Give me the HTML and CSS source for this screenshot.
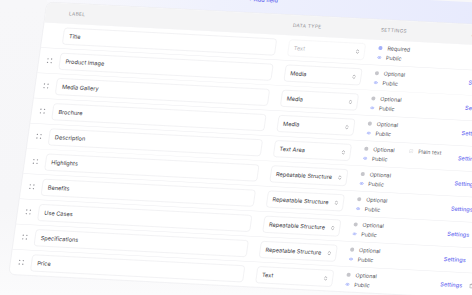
FILE: index.html
```html
<!DOCTYPE html>
<html>
<head>
<meta charset="utf-8">
<link rel="stylesheet" href="styles.css">
</head>
<body>
<div class="stage">
  <div class="board">
    <div class="toolbar"><span class="add">+ Add field</span></div>
    <div class="card">
      <div class="head">
        <div class="h-label">Label</div>
        <div class="h-type">Data type</div>
        <div class="h-set">Settings</div>
        <div class="h-act">Actions</div>
      </div>

      <div class="row">
        <div class="grip"></div>
        <div class="field">Title</div>
        <div class="select is-disabled"><span>Text</span><svg class="chev" viewBox="0 0 8 12"><path d="M1.5 4.5 4 2l2.5 2.5M1.5 7.5 4 10l2.5-2.5"/></svg></div>
        <div class="settings">
          <div class="opts">
            <div class="opt"><i class="dot req"></i>Required</div>
            <div class="opt"><svg class="eye" viewBox="0 0 10 7"><path d="M.8 3.5C2 1.6 3.4.8 5 .8s3 .8 4.2 2.7C8 5.4 6.6 6.2 5 6.2S2 5.4.8 3.5Z"/><circle cx="5" cy="3.5" r="1.3"/></svg>Public</div>
          </div>
        </div>
        <div class="link"></div>
        <div class="act"></div>
      </div>

      <div class="row">
        <div class="grip"><div class="dots"><span></span><span></span><span></span><span></span></div></div>
        <div class="field">Product Image</div>
        <div class="select"><span>Media</span><svg class="chev" viewBox="0 0 8 12"><path d="M1.5 4.5 4 2l2.5 2.5M1.5 7.5 4 10l2.5-2.5"/></svg></div>
        <div class="settings">
          <div class="opts">
            <div class="opt"><i class="dot"></i>Optional</div>
            <div class="opt"><svg class="eye" viewBox="0 0 10 7"><path d="M.8 3.5C2 1.6 3.4.8 5 .8s3 .8 4.2 2.7C8 5.4 6.6 6.2 5 6.2S2 5.4.8 3.5Z"/><circle cx="5" cy="3.5" r="1.3"/></svg>Public</div>
          </div>
        </div>
        <div class="link">Settings</div>
        <div class="act"><svg class="bin" viewBox="0 0 10 12"><path d="M1 3h8M3.5 3V1.5h3V3M2 3l.6 7.5h4.8L8 3"/></svg></div>
      </div>

      <div class="row">
        <div class="grip"><div class="dots"><span></span><span></span><span></span><span></span></div></div>
        <div class="field">Media Gallery</div>
        <div class="select"><span>Media</span><svg class="chev" viewBox="0 0 8 12"><path d="M1.5 4.5 4 2l2.5 2.5M1.5 7.5 4 10l2.5-2.5"/></svg></div>
        <div class="settings">
          <div class="opts">
            <div class="opt"><i class="dot"></i>Optional</div>
            <div class="opt"><svg class="eye" viewBox="0 0 10 7"><path d="M.8 3.5C2 1.6 3.4.8 5 .8s3 .8 4.2 2.7C8 5.4 6.6 6.2 5 6.2S2 5.4.8 3.5Z"/><circle cx="5" cy="3.5" r="1.3"/></svg>Public</div>
          </div>
        </div>
        <div class="link">Settings</div>
        <div class="act"><svg class="bin" viewBox="0 0 10 12"><path d="M1 3h8M3.5 3V1.5h3V3M2 3l.6 7.5h4.8L8 3"/></svg></div>
      </div>

      <div class="row">
        <div class="grip"><div class="dots"><span></span><span></span><span></span><span></span></div></div>
        <div class="field">Brochure</div>
        <div class="select"><span>Media</span><svg class="chev" viewBox="0 0 8 12"><path d="M1.5 4.5 4 2l2.5 2.5M1.5 7.5 4 10l2.5-2.5"/></svg></div>
        <div class="settings">
          <div class="opts">
            <div class="opt"><i class="dot"></i>Optional</div>
            <div class="opt"><svg class="eye" viewBox="0 0 10 7"><path d="M.8 3.5C2 1.6 3.4.8 5 .8s3 .8 4.2 2.7C8 5.4 6.6 6.2 5 6.2S2 5.4.8 3.5Z"/><circle cx="5" cy="3.5" r="1.3"/></svg>Public</div>
          </div>
        </div>
        <div class="link">Settings</div>
        <div class="act"><svg class="bin" viewBox="0 0 10 12"><path d="M1 3h8M3.5 3V1.5h3V3M2 3l.6 7.5h4.8L8 3"/></svg></div>
      </div>

      <div class="row">
        <div class="grip"><div class="dots"><span></span><span></span><span></span><span></span></div></div>
        <div class="field">Description</div>
        <div class="select"><span>Text Area</span><svg class="chev" viewBox="0 0 8 12"><path d="M1.5 4.5 4 2l2.5 2.5M1.5 7.5 4 10l2.5-2.5"/></svg></div>
        <div class="settings">
          <div class="opts">
            <div class="opt"><i class="dot"></i>Optional</div>
            <div class="opt"><svg class="eye" viewBox="0 0 10 7"><path d="M.8 3.5C2 1.6 3.4.8 5 .8s3 .8 4.2 2.7C8 5.4 6.6 6.2 5 6.2S2 5.4.8 3.5Z"/><circle cx="5" cy="3.5" r="1.3"/></svg>Public</div>
          </div>
          <div class="plain"><svg class="check" viewBox="0 0 9 9"><rect x=".6" y=".6" width="7.8" height="7.8" rx="1.6"/><path d="M2.4 4.6 3.9 6l2.7-3"/></svg>Plain text</div>
        </div>
        <div class="link">Settings</div>
        <div class="act"><svg class="bin" viewBox="0 0 10 12"><path d="M1 3h8M3.5 3V1.5h3V3M2 3l.6 7.5h4.8L8 3"/></svg></div>
      </div>

      <div class="row">
        <div class="grip"><div class="dots"><span></span><span></span><span></span><span></span></div></div>
        <div class="field">Highlights</div>
        <div class="select"><span>Repeatable Structure</span><svg class="chev" viewBox="0 0 8 12"><path d="M1.5 4.5 4 2l2.5 2.5M1.5 7.5 4 10l2.5-2.5"/></svg></div>
        <div class="settings">
          <div class="opts">
            <div class="opt"><i class="dot"></i>Optional</div>
            <div class="opt"><svg class="eye" viewBox="0 0 10 7"><path d="M.8 3.5C2 1.6 3.4.8 5 .8s3 .8 4.2 2.7C8 5.4 6.6 6.2 5 6.2S2 5.4.8 3.5Z"/><circle cx="5" cy="3.5" r="1.3"/></svg>Public</div>
          </div>
        </div>
        <div class="link">Settings</div>
        <div class="act"><svg class="bin" viewBox="0 0 10 12"><path d="M1 3h8M3.5 3V1.5h3V3M2 3l.6 7.5h4.8L8 3"/></svg></div>
      </div>

      <div class="row">
        <div class="grip"><div class="dots"><span></span><span></span><span></span><span></span></div></div>
        <div class="field">Benefits</div>
        <div class="select"><span>Repeatable Structure</span><svg class="chev" viewBox="0 0 8 12"><path d="M1.5 4.5 4 2l2.5 2.5M1.5 7.5 4 10l2.5-2.5"/></svg></div>
        <div class="settings">
          <div class="opts">
            <div class="opt"><i class="dot"></i>Optional</div>
            <div class="opt"><svg class="eye" viewBox="0 0 10 7"><path d="M.8 3.5C2 1.6 3.4.8 5 .8s3 .8 4.2 2.7C8 5.4 6.6 6.2 5 6.2S2 5.4.8 3.5Z"/><circle cx="5" cy="3.5" r="1.3"/></svg>Public</div>
          </div>
        </div>
        <div class="link">Settings</div>
        <div class="act"><svg class="bin" viewBox="0 0 10 12"><path d="M1 3h8M3.5 3V1.5h3V3M2 3l.6 7.5h4.8L8 3"/></svg></div>
      </div>

      <div class="row">
        <div class="grip"><div class="dots"><span></span><span></span><span></span><span></span></div></div>
        <div class="field">Use Cases</div>
        <div class="select"><span>Repeatable Structure</span><svg class="chev" viewBox="0 0 8 12"><path d="M1.5 4.5 4 2l2.5 2.5M1.5 7.5 4 10l2.5-2.5"/></svg></div>
        <div class="settings">
          <div class="opts">
            <div class="opt"><i class="dot"></i>Optional</div>
            <div class="opt"><svg class="eye" viewBox="0 0 10 7"><path d="M.8 3.5C2 1.6 3.4.8 5 .8s3 .8 4.2 2.7C8 5.4 6.6 6.2 5 6.2S2 5.4.8 3.5Z"/><circle cx="5" cy="3.5" r="1.3"/></svg>Public</div>
          </div>
        </div>
        <div class="link">Settings</div>
        <div class="act"><svg class="bin" viewBox="0 0 10 12"><path d="M1 3h8M3.5 3V1.5h3V3M2 3l.6 7.5h4.8L8 3"/></svg></div>
      </div>

      <div class="row">
        <div class="grip"><div class="dots"><span></span><span></span><span></span><span></span></div></div>
        <div class="field">Specifications</div>
        <div class="select"><span>Repeatable Structure</span><svg class="chev" viewBox="0 0 8 12"><path d="M1.5 4.5 4 2l2.5 2.5M1.5 7.5 4 10l2.5-2.5"/></svg></div>
        <div class="settings">
          <div class="opts">
            <div class="opt"><i class="dot"></i>Optional</div>
            <div class="opt"><svg class="eye" viewBox="0 0 10 7"><path d="M.8 3.5C2 1.6 3.4.8 5 .8s3 .8 4.2 2.7C8 5.4 6.6 6.2 5 6.2S2 5.4.8 3.5Z"/><circle cx="5" cy="3.5" r="1.3"/></svg>Public</div>
          </div>
        </div>
        <div class="link">Settings</div>
        <div class="act"><svg class="bin" viewBox="0 0 10 12"><path d="M1 3h8M3.5 3V1.5h3V3M2 3l.6 7.5h4.8L8 3"/></svg></div>
      </div>

      <div class="row">
        <div class="grip"><div class="dots"><span></span><span></span><span></span><span></span></div></div>
        <div class="field">Price</div>
        <div class="select"><span>Text</span><svg class="chev" viewBox="0 0 8 12"><path d="M1.5 4.5 4 2l2.5 2.5M1.5 7.5 4 10l2.5-2.5"/></svg></div>
        <div class="settings">
          <div class="opts">
            <div class="opt"><i class="dot"></i>Optional</div>
            <div class="opt"><svg class="eye" viewBox="0 0 10 7"><path d="M.8 3.5C2 1.6 3.4.8 5 .8s3 .8 4.2 2.7C8 5.4 6.6 6.2 5 6.2S2 5.4.8 3.5Z"/><circle cx="5" cy="3.5" r="1.3"/></svg>Public</div>
          </div>
        </div>
        <div class="link">Settings</div>
        <div class="act"><svg class="bin" viewBox="0 0 10 12"><path d="M1 3h8M3.5 3V1.5h3V3M2 3l.6 7.5h4.8L8 3"/></svg></div>
      </div>
    </div>
  </div>
</div>
</body>
</html>
```

FILE: styles.css
```css
html, body {
  margin: 0;
  padding: 0;
  overflow: hidden;
}
body {
  font-family: Inter, "Noto Sans", "Liberation Sans", sans-serif;
}
.stage {
  width: 472px;
  height: 295px;
  overflow: hidden;
  background: linear-gradient(180deg, #f7f7f9 0%, #f6f6f8 70%, #fbfbfc 100%);
}
.board {
  width: 1080px;
  transform-origin: 0 0;
  transform: matrix(0.4494, 0.0234, -0.0632, 0.45, 49.78, -19.74);
}
.toolbar {
  height: 48px;
  box-sizing: border-box;
  padding: 11px 0 0 445px;
  background: linear-gradient(90deg, #f9f9fc 0%, #eff1fd 35%, #e6e9fd 100%);
  color: #6468ee;
  font-size: 12.5px;
  line-height: 16px;
  font-weight: 500;
}
.card {
  background: #fff;
  border: 1px solid #e6e6ea;
  border-radius: 14px;
  overflow: hidden;
}
.head {
  display: flex;
  align-items: center;
  height: 44px;
  background: #f4f4f5;
  font-size: 10.5px;
  letter-spacing: 0.07em;
  text-transform: uppercase;
  color: #8c8c92;
}
.h-label { margin-left: 52px; width: 498px; }
.h-type { width: 196px; }
.h-set { width: 202px; }
.h-act { width: 100px; }

.row {
  display: flex;
  align-items: center;
  height: 56px;
  box-sizing: border-box;
  border-top: 1px solid #ececef;
}
.grip {
  width: 46px;
  display: flex;
  justify-content: center;
}
.dots {
  display: grid;
  grid-template-columns: 3px 3px;
  gap: 5px 5px;
}
.dots span {
  width: 3px;
  height: 3px;
  border-radius: 50%;
  background: #929298;
}
.field {
  width: 473px;
  height: 37px;
  box-sizing: border-box;
  border: 1px solid #e3e3e7;
  border-radius: 7px;
  display: flex;
  align-items: center;
  padding-left: 12px;
  font-size: 12.5px;
  color: #38383d;
}
.select {
  width: 170px;
  height: 37px;
  margin-left: 28px;
  box-sizing: border-box;
  border: 1px solid #e3e3e7;
  border-radius: 7px;
  display: flex;
  align-items: center;
  justify-content: space-between;
  padding: 0 11px 0 11px;
  font-size: 12.5px;
  color: #38383d;
}
.select.is-disabled {
  color: #b6b6bb;
  border-color: #ededf0;
}
.chev {
  width: 8px;
  height: 12px;
  fill: none;
  stroke: #8d8d93;
  stroke-width: 1.3;
  stroke-linecap: round;
  stroke-linejoin: round;
}
.settings {
  width: 182px;
  margin-left: 29px;
  display: flex;
  align-items: flex-start;
  font-size: 12px;
  color: #55555b;
}
.opts {
  width: 100px;
  display: flex;
  flex-direction: column;
}
.opt {
  display: flex;
  align-items: center;
  gap: 10px;
  height: 21px;
}
.dot {
  width: 9px;
  height: 9px;
  border-radius: 50%;
  background: #c6c6cb;
  margin: 0 1px 0 0;
}
.dot.req { background: #a3b0fa; }
.eye {
  width: 10px;
  height: 7px;
  fill: #dfe4fe;
  stroke: #a3b0fa;
  stroke-width: 1.4;
}
.eye circle { fill: #a3b0fa; stroke: none; }
.plain {
  display: flex;
  align-items: center;
  gap: 11px;
  height: 21px;
  color: #6c6c72;
}
.check {
  width: 9px;
  height: 9px;
  fill: none;
  stroke: #cdcdd2;
  stroke-width: 1;
}
.link {
  width: 64px;
  margin-left: 28px;
  font-size: 12.5px;
  font-weight: 500;
  color: #6a6cf0;
}
.act {
  width: 24px;
  display: flex;
}
.bin {
  width: 10px;
  height: 12px;
  fill: none;
  stroke: #9a9aa0;
  stroke-width: 1.2;
  stroke-linejoin: round;
}
```
